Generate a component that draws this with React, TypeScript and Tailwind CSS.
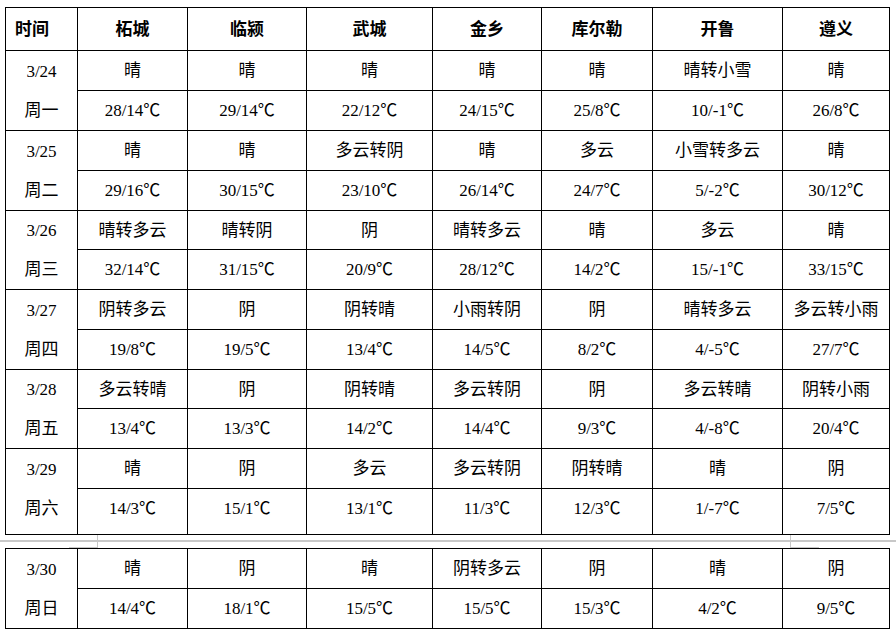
import React from "react";

type Day = { date: string; week: string; cells: [string, string][] };

const cities = ["柘城", "临颍", "武城", "金乡", "库尔勒", "开鲁", "遵义"];

const days: Day[] = [
  { date: "3/24", week: "周一", cells: [["晴", "28/14℃"], ["晴", "29/14℃"], ["晴", "22/12℃"], ["晴", "24/15℃"], ["晴", "25/8℃"], ["晴转小雪", "10/-1℃"], ["晴", "26/8℃"]] },
  { date: "3/25", week: "周二", cells: [["晴", "29/16℃"], ["晴", "30/15℃"], ["多云转阴", "23/10℃"], ["晴", "26/14℃"], ["多云", "24/7℃"], ["小雪转多云", "5/-2℃"], ["晴", "30/12℃"]] },
  { date: "3/26", week: "周三", cells: [["晴转多云", "32/14℃"], ["晴转阴", "31/15℃"], ["阴", "20/9℃"], ["晴转多云", "28/12℃"], ["晴", "14/2℃"], ["多云", "15/-1℃"], ["晴", "33/15℃"]] },
  { date: "3/27", week: "周四", cells: [["阴转多云", "19/8℃"], ["阴", "19/5℃"], ["阴转晴", "13/4℃"], ["小雨转阴", "14/5℃"], ["阴", "8/2℃"], ["晴转多云", "4/-5℃"], ["多云转小雨", "27/7℃"]] },
  { date: "3/28", week: "周五", cells: [["多云转晴", "13/4℃"], ["阴", "13/3℃"], ["阴转晴", "14/2℃"], ["多云转阴", "14/4℃"], ["阴", "9/3℃"], ["多云转晴", "4/-8℃"], ["阴转小雨", "20/4℃"]] },
  { date: "3/29", week: "周六", cells: [["晴", "14/3℃"], ["阴", "15/1℃"], ["多云", "13/1℃"], ["多云转阴", "11/3℃"], ["阴转晴", "12/3℃"], ["晴", "1/-7℃"], ["阴", "7/5℃"]] },
];

const last: Day = { date: "3/30", week: "周日", cells: [["晴", "14/4℃"], ["阴", "18/1℃"], ["晴", "15/5℃"], ["阴转多云", "15/5℃"], ["阴", "15/3℃"], ["晴", "4/2℃"], ["阴", "9/5℃"]] };

const cell = "border-r border-b border-black flex items-center justify-center";

function DayRows({ d, h1, h2, pb }: { d: Day; h1: string; h2: string; pb?: boolean }) {
  return (
    <>
      <div className="row-span-2 border-r border-b border-black flex flex-col">
        <div className={`${h1} shrink-0 flex items-center justify-center`}>{d.date}</div>
        <div className={`flex-1 min-h-0 flex items-center justify-center ${pb ? "pb-[6px]" : ""}`}>{d.week}</div>
      </div>
      {d.cells.map((c, i) => (
        <div key={"a" + i} className={`${cell} ${h1}`}>
          {c[0]}
        </div>
      ))}
      {d.cells.map((c, i) => (
        <div key={"b" + i} className={`${cell} ${h2} ${pb ? "pb-[6px]" : ""}`}>
          {c[1]}
        </div>
      ))}
    </>
  );
}

const gridCols = "grid grid-cols-[72px_110px_119px_126px_109px_111px_130px_107px] w-[885px] border-l border-t border-black";

export default function App() {
  const heights: [string, string][] = [
    ["h-[40px]", "h-[40px]"],
    ["h-[40px]", "h-[40px]"],
    ["h-[39px]", "h-[40px]"],
    ["h-[40px]", "h-[40px]"],
    ["h-[39px]", "h-[40px]"],
    ["h-[40px]", "h-[46px]"],
  ];
  return (
    <div
      className="w-[896px] h-[636px] bg-white text-black text-[17px] leading-none overflow-hidden pt-[7px]"
      style={{ fontFamily: '"Liberation Serif", "Noto Sans CJK SC", serif' }}
    >
      <div className="pl-[5px]">
        <div className={gridCols}>
          <div className="border-r border-b border-black h-[43px] flex items-center pl-[9px] font-bold">时间</div>
          {cities.map((c) => (
            <div key={c} className={`${cell} h-[43px] font-bold`}>
              {c}
            </div>
          ))}
          {days.map((d, i) => (
            <DayRows key={d.date} d={d} h1={heights[i][0]} h2={heights[i][1]} pb={i === days.length - 1} />
          ))}
        </div>
      </div>
      <div className="relative h-[13px]">
        <div className="absolute left-0 right-0 top-[5px] h-[2px] bg-[#c8c8c8]" />
        <div className="absolute left-[97px] top-0 h-[13px] w-[1px] bg-[#c8c8c8]" />
        <div className="absolute left-[69px] top-[12px] h-[1px] w-[29px] bg-[#c8c8c8]" />
        <div className="absolute left-[790px] top-0 h-[13px] w-[1px] bg-[#c8c8c8]" />
        <div className="absolute left-[790px] top-[12px] h-[1px] w-[29px] bg-[#c8c8c8]" />
      </div>
      <div className="pl-[5px]">
        <div className={gridCols}>
          <DayRows d={last} h1="h-[40px]" h2="h-[40px]" />
        </div>
      </div>
    </div>
  );
}
